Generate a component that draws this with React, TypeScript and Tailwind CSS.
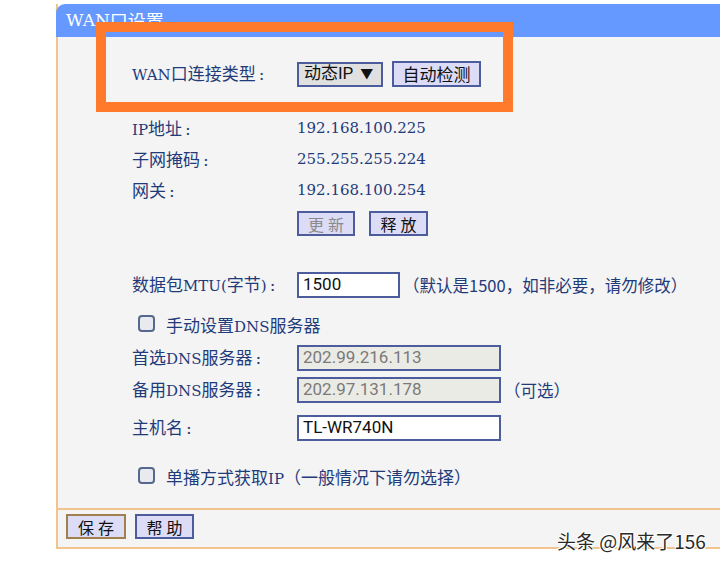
import React from "react";

const serif = { fontFamily: '"DejaVu Serif", "Noto Sans CJK SC", serif' };
const sans = { fontFamily: 'Roboto, "Noto Sans CJK SC", sans-serif' };
const cjk = { fontFamily: '"Noto Sans CJK SC", sans-serif' };

function Mixed({ text }: { text: string }) {
  const parts = text.split(/([\u3000-\u9fff]+)/).filter((p) => p.length > 0);
  return (
    <>
      {parts.map((p, i) =>
        /[\u3000-\u9fff]/.test(p) ? (
          <span key={i} className="text-[17px]" style={cjk}>
            {p}
          </span>
        ) : (
          <span key={i} className="text-[15px]" style={serif}>
            {p}
          </span>
        )
      )}
    </>
  );
}

function Label({ children }: { children: string }) {
  return (
    <div className="w-[165px] shrink-0 text-[#1f3b7a] flex items-baseline">
      <span>
        <Mixed text={children} />
      </span>
      <span className="ml-[3px] text-[17px]" style={serif}>
        :
      </span>
    </div>
  );
}

function Btn({
  children,
  w,
  dim,
  brown,
}: {
  children: React.ReactNode;
  w: string;
  dim?: boolean;
  brown?: boolean;
}) {
  return (
    <div
      className={`${w} h-[25px] flex items-center justify-center bg-[#dcdcf7] border-2 text-[16px] tracking-[4px] pl-[4px] ${
        brown ? "border-[#a2804e]" : "border-[#4c5c9c]"
      } ${dim ? "text-[#8a8a8a]" : "text-[#111]"}`}
      style={cjk}
    >
      {children}
    </div>
  );
}

function Input({
  value,
  w,
  disabled,
}: {
  value: string;
  w: string;
  disabled?: boolean;
}) {
  return (
    <div
      className={`${w} h-[26px] border-2 border-[#4c5c9c] flex items-center px-[4px] text-[17px] ${
        disabled ? "bg-[#ebebe6] text-[#7a7a7a]" : "bg-white text-[#111]"
      }`}
      style={sans}
    >
      {value}
    </div>
  );
}

function Check() {
  return (
    <div className="w-[17px] h-[17px] rounded-[4px] border-2 border-[#56688e] bg-[#e9eaf0] shrink-0" />
  );
}

export default function App() {
  return (
    <div className="relative w-[720px] h-[565px] bg-white overflow-hidden">
      <div className="ml-[56px] mt-[4px] w-[664px] h-[545px] flex flex-col border-l-2 border-b-2 border-[#f0c48c]">
        <div className="h-[33px] shrink-0 bg-[#6699ff] rounded-tl-[9px] -ml-[2px] pl-[10px] flex items-center text-white">
          <span className="text-[17px]" style={serif}>WAN</span>
          <span className="text-[18px]" style={cjk}>口设置</span>
        </div>
        <div className="h-[473px] shrink-0 bg-[#f4f4f4] border-b-2 border-[#f0c48c] pl-[74px] flex flex-col">
          <div className="h-[30px] mt-[22px] flex items-center">
            <Label>WAN口连接类型</Label>
            <div
              className="w-[86px] h-[25px] bg-[#e0e0e0] border-2 border-[#4c5c9c] flex items-center pl-[5px] text-[17px] text-[#111]"
              style={sans}
            >
              动态IP
              <span className="ml-[7px] text-[13px]">▼</span>
            </div>
            <div
              className="ml-[9px] w-[89px] h-[26px] bg-[#dcdcf7] border-2 border-[#4c5c9c] flex items-center justify-center text-[17px] text-[#111]"
              style={cjk}
            >
              自动检测
            </div>
          </div>
          <div className="h-[31px] mt-[24px] flex items-center">
            <Label>IP地址</Label>
            <div className="text-[15px] text-[#1f3b7a]" style={serif}>192.168.100.225</div>
          </div>
          <div className="h-[31px] flex items-center">
            <Label>子网掩码</Label>
            <div className="text-[15px] text-[#1f3b7a]" style={serif}>255.255.255.224</div>
          </div>
          <div className="h-[31px] flex items-center">
            <Label>网关</Label>
            <div className="text-[15px] text-[#1f3b7a]" style={serif}>192.168.100.254</div>
          </div>
          <div className="h-[31px] mt-[2px] flex items-center">
            <div className="w-[165px] shrink-0" />
            <Btn w="w-[58px]" dim>更新</Btn>
            <div className="w-[14px]" />
            <Btn w="w-[59px]">释放</Btn>
          </div>
          <div className="h-[30px] mt-[31px] flex items-center">
            <Label>数据包MTU(字节)</Label>
            <Input value="1500" w="w-[103px]" />
            <div className="ml-[3px] text-[16.5px] text-[#1f3b7a]" style={cjk}>
              （默认是1500，如非必要，请勿修改）
            </div>
          </div>
          <div className="h-[30px] mt-[8px] flex items-center">
            <div className="ml-[6px] mr-[11px]">
              <Check />
            </div>
            <div className="text-[#1f3b7a] pt-[4px]">
              <Mixed text="手动设置DNS服务器" />
            </div>
          </div>
          <div className="h-[30px] mt-[5px] flex items-center">
            <Label>首选DNS服务器</Label>
            <Input value="202.99.216.113" w="w-[204px]" disabled />
          </div>
          <div className="h-[30px] mt-[2px] flex items-center">
            <Label>备用DNS服务器</Label>
            <Input value="202.97.131.178" w="w-[204px]" disabled />
            <div className="ml-[3px] text-[16.5px] text-[#1f3b7a]" style={cjk}>（可选）</div>
          </div>
          <div className="h-[30px] mt-[8px] flex items-center">
            <Label>主机名</Label>
            <Input value="TL-WR740N" w="w-[204px]" />
          </div>
          <div className="h-[30px] mt-[17px] flex items-center">
            <div className="ml-[6px] mr-[11px]">
              <Check />
            </div>
            <div className="text-[#1f3b7a] pt-[4px]">
              <Mixed text="单播方式获取IP" />
              <span className="text-[17px]" style={cjk}>（一般情况下请勿选择）</span>
            </div>
          </div>
        </div>
        <div className="flex-1 bg-[#f4f4f4] flex items-start pt-[4px] pl-[8px] gap-[9px]">
          <Btn w="w-[60px]" brown>保存</Btn>
          <Btn w="w-[59px]">帮助</Btn>
        </div>
      </div>

      <div className="absolute left-[96px] top-[22px] w-[417px] h-[90px] border-[10px] border-[#ff7a2b]" />

      <div
        className="absolute left-[557px] top-[527px] text-[19px] text-[#2a2a2a]"
        style={{
          ...cjk,
          textShadow:
            "1px 0 0 #fff, -1px 0 0 #fff, 0 1px 0 #fff, 0 -1px 0 #fff, 1px 1px 0 #fff, -1px -1px 0 #fff",
        }}
      >
        头条 @风来了156
      </div>
    </div>
  );
}
